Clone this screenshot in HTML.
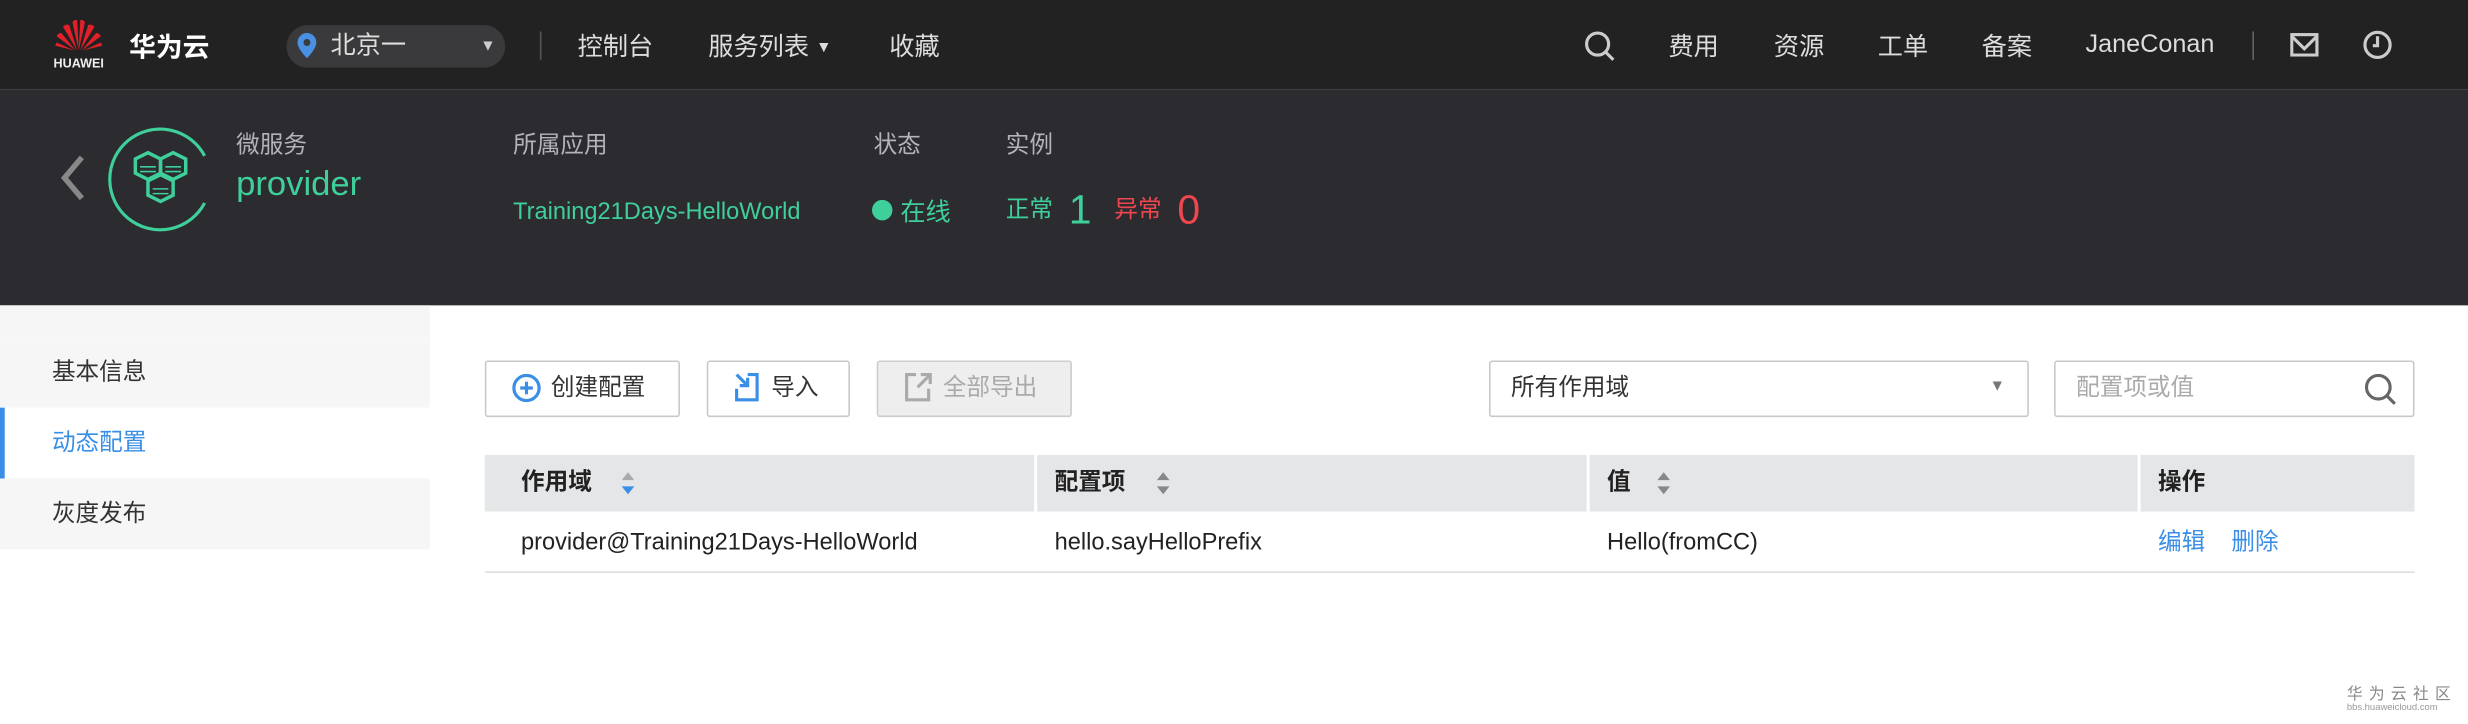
<!DOCTYPE html>
<html><head><meta charset="utf-8"><style>
*{margin:0;padding:0;box-sizing:border-box}
html,body{width:2468px;height:724px;overflow:hidden;background:#fff}
#w{position:absolute;left:0;top:0;width:1568px;height:460px;transform:scale(1.574);transform-origin:0 0;font-family:"Liberation Sans","Noto Sans CJK SC",sans-serif;}
.a{position:absolute;white-space:nowrap}
.nav{color:#ddd;font-size:16px;top:16px}
.lbl{color:#b4b4b8;font-size:15px;top:81px}
.g{color:#3ecf9b}
.side{left:0;width:273px;height:45px;line-height:45px;padding-left:33px;font-size:15px;color:#333;background:#f6f6f6}
.btn{top:229px;height:36px;border:1px solid #c8c8c8;border-radius:2px;background:#fff;font-size:15px;color:#333;line-height:34px}
.th{top:289px;height:36px;background:#e4e6e8;font-size:15px;font-weight:bold;color:#222;line-height:36px;padding-left:23px}
.td{top:325px;height:39px;line-height:39px;font-size:15px;color:#222}
</style></head><body><div id="w">
<div class="a" style="left:0;top:0;width:1568px;height:57px;background:#222"></div>
<div class="a" style="left:0;top:57px;width:1568px;height:137px;background:#2c2c30"></div>
<!-- logo -->
<svg class="a" style="left:34px;top:12px" width="32" height="22" viewBox="0 0 32 22">
<g fill="#e3202a"><path d="M16 20 L12 2 Q14 0 15 1Z"/><path d="M16 20 L20 2 Q18 0 17 1Z"/><path d="M15 20 L6 5 Q8 3 10 4Z"/><path d="M17 20 L26 5 Q24 3 22 4Z"/><path d="M14 20 L2 11 Q3 9 5 9Z"/><path d="M18 20 L30 11 Q29 9 27 9Z"/><path d="M13 20 L1 17 L2 15Z"/><path d="M19 20 L31 17 L30 15Z"/></g></svg>
<div class="a" style="left:34px;top:36px;font-size:8px;color:#eee;font-weight:bold">HUAWEI</div>
<div class="a" style="left:82px;top:16px;font-size:17px;color:#fff;font-weight:bold">华为云</div>
<div class="a" style="left:182px;top:16px;width:139px;height:27px;border-radius:14px;background:#3a3a3c"></div>
<svg class="a" style="left:189px;top:21px" width="12" height="16" viewBox="0 0 12 16"><path d="M6 0a6 6 0 0 1 6 6c0 4-6 10-6 10S0 10 0 6a6 6 0 0 1 6-6z" fill="#4a90e2"/><circle cx="6" cy="6" r="2.2" fill="#3a3a3c"/></svg>
<div class="a nav" style="left:210px;top:15px">北京一</div>
<div class="a" style="left:305px;top:24px;font-size:10px;color:#ccc">▼</div>
<div class="a" style="left:343px;top:20px;width:1px;height:18px;background:#555"></div>
<div class="a nav" style="left:367px">控制台</div>
<div class="a nav" style="left:450px">服务列表 <span style="font-size:10px;position:relative;top:-2px">▼</span></div>
<div class="a nav" style="left:565px">收藏</div>
<svg class="a" style="left:1006px;top:19px" width="20" height="20" viewBox="0 0 20 20"><circle cx="9" cy="9" r="7" fill="none" stroke="#ccc" stroke-width="2"/><path d="M14 14l5 5" stroke="#ccc" stroke-width="2"/></svg>
<div class="a nav" style="left:1060px">费用</div>
<div class="a nav" style="left:1127px">资源</div>
<div class="a nav" style="left:1193px">工单</div>
<div class="a nav" style="left:1259px">备案</div>
<div class="a nav" style="left:1325px;top:20px">JaneConan</div>
<div class="a" style="left:1431px;top:20px;width:1px;height:18px;background:#666"></div>
<svg class="a" style="left:1455px;top:21px" width="18" height="15" viewBox="0 0 18 15"><rect x="1" y="1" width="16" height="13" fill="none" stroke="#ccc" stroke-width="2"/><path d="M1 2l8 8 8-8" fill="none" stroke="#ccc" stroke-width="2"/></svg>
<svg class="a" style="left:1501px;top:19px" width="19" height="19" viewBox="0 0 19 19"><circle cx="9.5" cy="9.5" r="8" fill="none" stroke="#ccc" stroke-width="2"/><path d="M9.5 4v6h-3" fill="none" stroke="#ccc" stroke-width="2"/></svg>
<!-- banner -->
<svg class="a" style="left:37px;top:98px" width="18" height="30" viewBox="0 0 18 30"><path d="M15 2L4 15l11 13" fill="none" stroke="#888" stroke-width="3.5"/></svg>
<svg class="a" style="left:68px;top:79px" width="70" height="70" viewBox="0 0 70 70"><path d="M62 20 A32 32 0 1 0 62 50" fill="none" stroke="#3ecf9b" stroke-width="2"/>
<g fill="none" stroke="#3ecf9b" stroke-width="2.2"><path d="M18 22l8-4 8 4v9l-8 4-8-4z"/><path d="M34 22l8-4 8 4v9l-8 4-8-4z"/><path d="M26 36l8-4 8 4v9l-8 4-8-4z"/></g>
<g stroke="#3ecf9b" stroke-width="1"><path d="M21 27h10M21 30h10M37 27h10M37 30h10M29 41h10M29 44h10"/></g></svg>
<div class="a lbl" style="left:150px">微服务</div>
<div class="a g" style="left:150px;top:104px;font-size:22px">provider</div>
<div class="a lbl" style="left:326px">所属应用</div>
<div class="a g" style="left:326px;top:126px;font-size:15px">Training21Days-HelloWorld</div>
<div class="a lbl" style="left:555px">状态</div>
<div class="a" style="left:554px;top:127px;width:13px;height:13px;border-radius:50%;background:#3ecf9b"></div>
<div class="a g" style="left:572px;top:121px;font-size:16px">在线</div>
<div class="a lbl" style="left:639px">实例</div>
<div class="a g" style="left:639px;top:122px;font-size:15px">正常</div>
<div class="a g" style="left:679px;top:118px;font-size:26px">1</div>
<div class="a" style="left:708px;top:122px;font-size:15px;color:#f0464e">异常</div>
<div class="a" style="left:748px;top:118px;font-size:26px;color:#f0464e">0</div>
<!-- sidebar -->
<div class="a" style="left:0;top:194px;width:273px;height:20px;background:#f6f6f6"></div>
<div class="a side" style="top:214px">基本信息</div>
<div class="a side" style="top:259px;background:#fff;color:#3a8ee6;border-left:3px solid #3a8ee6;padding-left:30px">动态配置</div>
<div class="a side" style="top:304px">灰度发布</div>
<!-- buttons -->
<div class="a btn" style="left:308px;width:124px;padding-left:41px">创建配置</div>
<svg class="a" style="left:325px;top:237px" width="19" height="19" viewBox="0 0 19 19"><circle cx="9.5" cy="9.5" r="8" fill="none" stroke="#3a8ee6" stroke-width="2"/><path d="M9.5 5.5v8M5.5 9.5h8" stroke="#3a8ee6" stroke-width="2"/></svg>
<div class="a btn" style="left:449px;width:91px;padding-left:40px">导入</div>
<svg class="a" style="left:465px;top:236px" width="20" height="20" viewBox="0 0 20 20"><path d="M10 2h6v16H3v-7" fill="none" stroke="#3a8ee6" stroke-width="2"/><path d="M3 2l7 7M10 4v5H5" fill="none" stroke="#3a8ee6" stroke-width="2"/></svg>
<div class="a btn" style="left:557px;width:124px;padding-left:41px;background:#eee;color:#aaa;border-color:#ccc">全部导出</div>
<svg class="a" style="left:573px;top:236px" width="20" height="20" viewBox="0 0 20 20"><path d="M9 2H3v16h14v-7" fill="none" stroke="#aaa" stroke-width="2"/><path d="M10 10l7-7M12 2h6v6" fill="none" stroke="#aaa" stroke-width="2"/></svg>
<div class="a btn" style="left:946px;width:343px;padding-left:13px">所有作用域</div>
<div class="a" style="left:1264px;top:240px;font-size:10px;color:#777">▼</div>
<div class="a btn" style="left:1305px;width:229px;padding-left:13px;color:#aaa">配置项或值</div>
<svg class="a" style="left:1501px;top:236px" width="22" height="22" viewBox="0 0 22 22"><circle cx="10" cy="10" r="7.5" fill="none" stroke="#666" stroke-width="2"/><path d="M15.5 15.5l5 5" stroke="#666" stroke-width="2"/></svg>
<!-- table -->
<div class="a th" style="left:308px;width:349px">作用域</div>
<div class="a th" style="left:659px;width:349px;padding-left:11px">配置项</div>
<div class="a th" style="left:1010px;width:348px;padding-left:11px">值</div>
<div class="a th" style="left:1360px;width:174px;padding-left:11px">操作</div>
<svg class="a" style="left:394px;top:299px" width="10" height="16" viewBox="0 0 10 16"><path d="M5 1l4 5H1z" fill="#aaa"/><path d="M5 15l4-5H1z" fill="#3a8ee6"/></svg>
<svg class="a" style="left:734px;top:299px" width="10" height="16" viewBox="0 0 10 16"><path d="M5 1l4 5H1z" fill="#888"/><path d="M5 15l4-5H1z" fill="#888"/></svg>
<svg class="a" style="left:1052px;top:299px" width="10" height="16" viewBox="0 0 10 16"><path d="M5 1l4 5H1z" fill="#888"/><path d="M5 15l4-5H1z" fill="#888"/></svg>
<div class="a td" style="left:331px">provider@Training21Days-HelloWorld</div>
<div class="a td" style="left:670px">hello.sayHelloPrefix</div>
<div class="a td" style="left:1021px">Hello(fromCC)</div>
<div class="a td" style="left:1371px;color:#3a8ee6">编辑&nbsp;&nbsp;&nbsp;&nbsp;删除</div>
<div class="a" style="left:308px;top:363px;width:1226px;height:1px;background:#ddd"></div>
<div class="a" style="left:1491px;top:432px;font-size:10px;color:#888;letter-spacing:4px">华为云社区</div>
<div class="a" style="left:1491px;top:447px;font-size:6px;color:#999">bbs.huaweicloud.com</div>
</div></body></html>
